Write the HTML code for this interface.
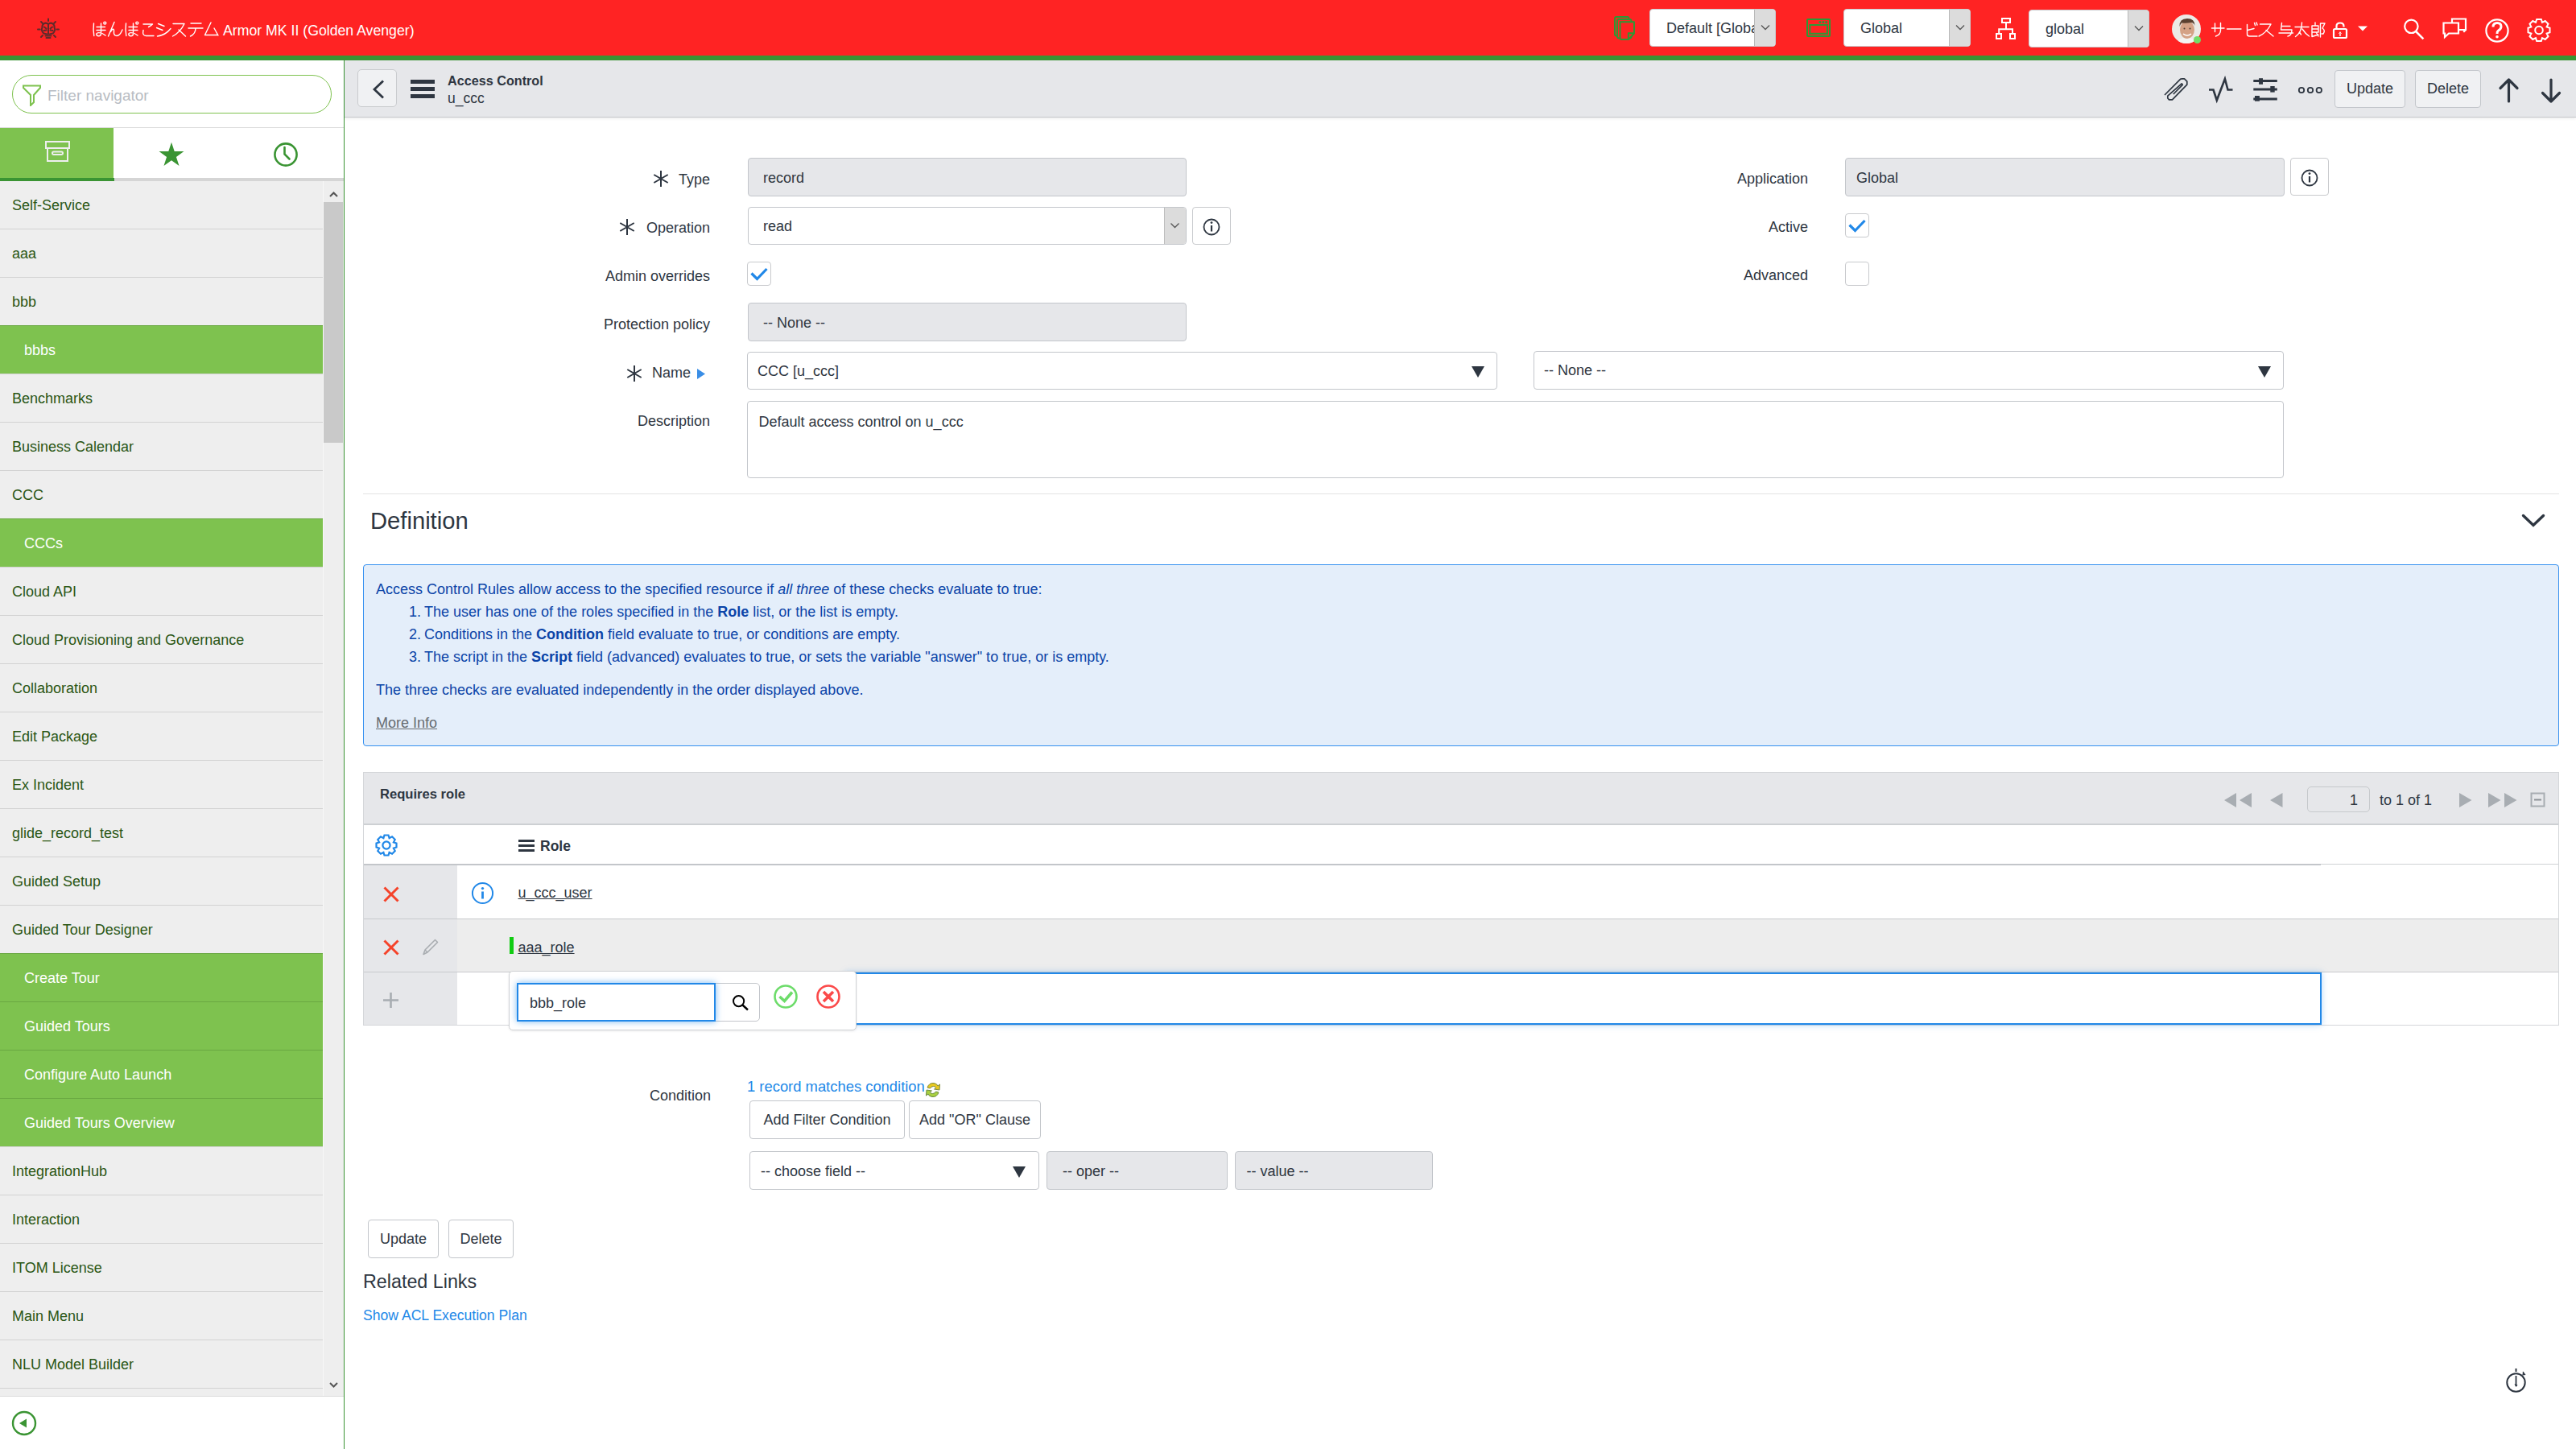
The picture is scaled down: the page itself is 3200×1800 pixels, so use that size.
<!DOCTYPE html>
<html><head><meta charset="utf-8">
<style>
*{box-sizing:border-box;margin:0;padding:0}
html,body{width:3200px;height:1800px;overflow:hidden;background:#fff;font-family:"Liberation Sans",sans-serif;color:#2e3641}
.a{position:absolute}
svg{display:block}
#hdr{left:0;top:0;width:3200px;height:69px;background:#ff2323}
#gbar{left:0;top:69px;width:3200px;height:6px;background:#3a9433}
#side{left:0;top:75px;width:427px;height:1725px;background:#fff}
#sideb{left:427px;top:75px;width:1px;height:1725px;background:#3a9433}
#cont{left:428px;top:75px;width:2772px;height:1725px;background:#fff}
.hsel{background:#fff;border:1px solid #c9cbce;border-radius:4px;height:47px;font-size:18px;color:#2e3641}
.hsel .t{position:absolute;left:20px;top:13px;white-space:nowrap;overflow:hidden}
.hsel .ar{position:absolute;right:0;top:0;width:26px;height:45px;background:#dcdcdc;border-left:1px solid #b9b9b9;border-radius:0 3px 3px 0}
.row{position:absolute;left:0;width:401px;height:60px;background:#eeeeee;border-top:1px solid #d2d2d2;font-size:18px;color:#2a5614}
.row span{position:absolute;left:15px;top:20px;white-space:nowrap}
.row.g{background:#7ec24f;color:#fff;border-top:1px solid #6aa842}
.row.g span{left:30px}
.lbl{position:absolute;font-size:18px;color:#2e3641;white-space:nowrap;text-align:right}
.inp{position:absolute;border:1px solid #c3c6cb;border-radius:4px;background:#fff;font-size:18px;color:#2e3641}
.inp.ro{background:#e6e7ea}
.inp .t{position:absolute;left:19px;top:13px;white-space:nowrap}
.btn{position:absolute;border:1px solid #c3c6cb;border-radius:4px;background:#fff;font-size:18px;color:#2e3641;text-align:center;white-space:nowrap}
</style></head><body>
<div id="hdr" class="a">
<svg class="a" style="left:0;top:0" width="3200" height="69" viewBox="0 0 3200 69">
 <g fill="none" stroke="#5e2b2b" stroke-width="2" stroke-linecap="round">
  <path d="M60,23.5 V26 M49.5,36.5 H47 M70.5,36.5 H73 M51,27 L53,29 M69,27 L67,29 M51,46 L53,44 M69,46 L67,44"/>
  <path d="M60,30 Q57,27.5 54.5,29.5 Q52,31 52.5,34 Q51,36.5 52.5,39 Q53.5,42 56.5,42 Q58.5,43 60,42 Q61.5,43 63.5,42 Q66.5,42 67.5,39 Q69,36.5 67.5,34 Q68,31 65.5,29.5 Q63,27.5 60,30 Z"/>
  <path d="M60,30 V42 M55,33.5 L57.5,35.5 M65,33.5 L62.5,35.5 M54.5,38 L57.5,37.5 M65.5,38 L62.5,37.5 M56.5,44.5 H63.5 M57.5,47 H62.5"/>
 </g>
 <g fill="none" stroke="#fff" stroke-width="1.4" stroke-linecap="round" stroke-linejoin="round">
  <path d="M116.5,29 Q115.5,37 116.8,44.5 M120,33.5 H130.5 M120,37.5 H131 M125.5,29 V42 Q125.5,44.7 122.5,44.7 Q119.8,44.7 119.8,42.6 Q119.8,40.6 123,40.6 Q127,40.6 131,44"/>
  <circle cx="130.3" cy="28.6" r="1.5"/>
  <path d="M142,27.5 L134.5,45 M137.5,39.5 Q140,34.5 141.5,37 V41.5 Q142,44.5 145,44.5 Q149,44.5 152,37"/>
  <path d="M156.5,29 Q155.5,37 156.8,44.5 M160,33.5 H170.5 M160,37.5 H171 M165.5,29 V42 Q165.5,44.7 162.5,44.7 Q159.8,44.7 159.8,42.6 Q159.8,40.6 163,40.6 Q167,40.6 171,44"/>
  <circle cx="170.3" cy="28.6" r="1.5"/>
  <path d="M178,30 H189.5 Q187.5,32 184.5,33.5 M178,37.5 Q176.5,44.5 181.5,44.5 H191"/>
  <path d="M196.5,29.5 L204,32.5 M194.5,34.5 L202,37.5 M195.5,45 Q206,43.5 212,35.5"/>
  <path d="M215,29.5 H229 Q224,40 214.5,45 M222,37 L230.5,45"/>
  <path d="M237,29 H250 M234,35 H252 M243,35 Q243,42 236.5,45"/>
  <path d="M262,28 L254.5,43.5 H270.5 M266,35 L271,44"/>
 </g>
 <text x="277" y="44" fill="#fff" font-size="17.7" font-family="Liberation Sans">Armor MK II (Golden Avenger)</text>
 <!-- docs icon -->
 <g fill="#ff2323" stroke="#2a9a35" stroke-width="1.9" stroke-linejoin="round">
  <rect x="2006" y="21" width="17.5" height="23.5" rx="2"/>
  <rect x="2009" y="24" width="17.5" height="23.5" rx="2"/>
  <path d="M2012.5,27.2 H2030 V41.5 L2023,49 H2014.5 Q2012.5,49 2012.5,47 Z"/>
  <path d="M2022.8,48.5 V41.2 H2029.5" fill="none"/>
 </g>
 <!-- window icon -->
 <g fill="none" stroke="#2a9a35" stroke-width="2">
  <rect x="2245" y="24" width="28" height="21" rx="1"/>
  <rect x="2248.3" y="31" width="21.6" height="10.8"/>
 </g>
 <g fill="#2a9a35"><circle cx="2260.8" cy="27.6" r="1.5"/><circle cx="2264.8" cy="27.6" r="1.5"/><circle cx="2268.7" cy="27.6" r="1.5"/></g>
 <!-- hierarchy icon -->
 <g fill="none" stroke="#fff" stroke-width="2">
  <rect x="2487" y="23" width="10" height="5"/><rect x="2480" y="42" width="6" height="6"/><rect x="2497" y="42" width="6" height="6"/>
  <path d="M2492,28 V36.2 M2483.2,42 V36.2 H2500 V42"/>
 </g>
 <!-- lock -->
 <g fill="none" stroke="#fff" stroke-width="2.2">
  <rect x="2899" y="36" width="16" height="11" rx="1.5"/>
  <path d="M2902.5,36 V32.5 Q2902.5,28.5 2907,28.5 Q2911.5,28.5 2911.5,32.5 V33.5"/>
 </g>
 <path d="M2907,39 L2905,42 H2909 Z M2906.3,41.5 H2907.7 V45 H2906.3 Z" fill="#fff"/>
 <path d="M2929,32.5 H2941 L2935,38.5 Z" fill="#fff"/>
 <g fill="none" stroke="#fff" stroke-width="2.2" stroke-linecap="square">
  <circle cx="2995.4" cy="32.8" r="8.2"/><path d="M3002,40 L3009.5,47.5" stroke-width="2.6"/>
  <path d="M3046,28 V23.5 H3063 V37 L3061,39 M3063,37 H3055"/>
  <path d="M3035.5,28.5 H3054 V41.5 H3042 L3037,46 V41.5 H3035.5 Z"/>
  <circle cx="3102" cy="38" r="13.6"/>
 </g>
 <path d="M3097,33.5 Q3097,28.5 3102,28.5 Q3107,28.5 3107,33 Q3107,36 3103.5,38 Q3102,39 3102,42" fill="none" stroke="#fff" stroke-width="3"/>
 <circle cx="3102" cy="45.8" r="1.8" fill="#fff"/>
 <g transform="translate(3154,37.5)" fill="none" stroke="#fff" stroke-width="2">
  <path d="M-2.8,-13.5 H2.8 L4,-9.6 L7.7,-11.5 L11.5,-7.7 L9.6,-4 L13.5,-2.8 V2.8 L9.6,4 L11.5,7.7 L7.7,11.5 L4,9.6 L2.8,13.5 H-2.8 L-4,9.6 L-7.7,11.5 L-11.5,7.7 L-9.6,4 L-13.5,2.8 V-2.8 L-9.6,-4 L-11.5,-7.7 L-7.7,-11.5 L-4,-9.6 Z"/>
  <circle r="4.8"/>
 </g>
 <!-- name -->
 <g fill="none" stroke="#fff" stroke-width="1.4" stroke-linecap="round" stroke-linejoin="round">
  <path d="M2747.5,35 H2763 M2751.5,29 V39.5 M2758.5,28.5 V37.5 Q2758.5,43 2752.5,45"/>
  <path d="M2766.5,36 H2784"/>
  <path d="M2791.5,30.5 V42.5 Q2791.5,45 2794.5,45 H2804 M2792,37.5 L2800,35.5 M2800.5,28.5 L2801.5,31.5 M2803,28 L2804,31"/>
  <path d="M2807.5,30 H2821 Q2816,40.5 2806,45 M2815,37.5 L2824,45"/>
  <path d="M2834.5,28.5 L2833.5,37 H2847 Q2847,44 2842,45 M2834,32.5 H2845 M2831,41 H2848.5"/>
  <path d="M2851,33.5 H2868 M2859.5,28 Q2859.5,40 2851.5,45.5 M2860,36 Q2864,42 2868.5,45 M2856.5,40 L2858.5,43"/>
  <path d="M2872,32 H2880 V40 H2872 Z M2872,36 H2880 M2876,28 V32 M2872,40 V45.5 L2880,43 M2877,40 L2880,45 M2882.5,29 V46 M2882.5,29 H2888 L2885,35 Q2889,38 2886,42 H2884"/>
 </g>
</svg>
<div class="a hsel" style="left:2049px;top:11px;width:157px"><div class="t" style="width:126px">Default [Global]</div><div class="ar"><svg width="26" height="45"><path d="M8,19.5 L13,24.5 L18,19.5" fill="none" stroke="#555" stroke-width="1.3"/></svg></div></div>
<div class="a hsel" style="left:2290px;top:11px;width:158px"><div class="t">Global</div><div class="ar"><svg width="26" height="45"><path d="M8,19.5 L13,24.5 L18,19.5" fill="none" stroke="#555" stroke-width="1.3"/></svg></div></div>
<div class="a hsel" style="left:2520px;top:12px;width:150px"><div class="t">global</div><div class="ar"><svg width="26" height="45"><path d="M8,19.5 L13,24.5 L18,19.5" fill="none" stroke="#555" stroke-width="1.3"/></svg></div></div>
<svg class="a" style="left:2698px;top:18px" width="36" height="36"><defs><clipPath id="av"><circle cx="18" cy="18" r="18"/></clipPath></defs><g clip-path="url(#av)"><rect width="36" height="36" fill="#eceae6"/><path d="M6,36 Q8,29 18,28 Q28,29 30,36 Z" fill="#f4f4f2"/><ellipse cx="19" cy="19" rx="9" ry="11" fill="#d4a286"/><path d="M9.5,15 Q9,5 19,5 Q28.5,5 28.5,14 Q27,10 24,10 Q18,11 12,10.5 Q10.5,12 9.5,15 Z" fill="#5a4030"/><path d="M14,24 Q19,28 24,24" fill="none" stroke="#fff" stroke-width="1.6"/><circle cx="15.5" cy="17.5" r="1" fill="#4a3a30"/><circle cx="22.5" cy="17.5" r="1" fill="#4a3a30"/></g></svg>
<div class="a" style="left:2725px;top:45px;width:9px;height:9px;border-radius:50%;background:#71dd68"></div>
</div>
<div id="gbar" class="a"></div>
<div id="side" class="a">
<div class="a" style="left:15px;top:18px;width:397px;height:48px;border:1.5px solid #7ec24f;border-radius:24px;background:#fff"></div>
<svg class="a" style="left:27px;top:29px" width="26" height="28"><path d="M2,2.5 H23 V5 L15,14 V23 L11,27 V14 L2,5 Z" fill="none" stroke="#7ec24f" stroke-width="2"/></svg>
<div class="a" style="left:59px;top:33px;font-size:19px;color:#b7bcc3;white-space:nowrap">Filter navigator</div>
<div class="a" style="left:0;top:83px;width:427px;height:1px;background:#dcdcdc"></div>
<div class="a" style="left:0;top:84px;width:141px;height:62px;background:#7ec24f"></div>
<svg class="a" style="left:0;top:84px" width="427" height="62">
 <g fill="none" stroke="#eeeeee" stroke-width="2"><rect x="57" y="17" width="29" height="8"/><path d="M59,25 V41 H84 V25"/><rect x="65" y="29.5" width="13" height="3.5" rx="1.7"/></g>
 <path d="M213,16.5 L216.3,26.5 H226.8 L218.3,32.7 L221.5,42.7 L213,36.5 L204.5,42.7 L207.7,32.7 L199.2,26.5 H209.7 Z" fill="#3a9433" transform="translate(213,34) scale(1.12) translate(-213,-31)"/>
 <circle cx="355" cy="33" r="13.6" fill="none" stroke="#3a9433" stroke-width="2.6"/>
 <path d="M353.5,24 V32.5 L359.5,38.5" fill="none" stroke="#3a9433" stroke-width="2.6" stroke-linecap="round"/>
</svg>
<div class="a" style="left:0;top:146px;width:427px;height:4px;background:#d5d5d5"></div>
<div class="a" style="left:0;top:146px;width:142px;height:4px;background:#3a9433"></div>
<div class="a" style="left:0;top:150px;width:427px;height:1509px;overflow:hidden;background:#eeeeee">
<div class="row" style="top:-1px"><span>Self-Service</span></div>
<div class="row" style="top:59px"><span>aaa</span></div>
<div class="row" style="top:119px"><span>bbb</span></div>
<div class="row g" style="top:179px"><span>bbbs</span></div>
<div class="row" style="top:239px"><span>Benchmarks</span></div>
<div class="row" style="top:299px"><span>Business Calendar</span></div>
<div class="row" style="top:359px"><span>CCC</span></div>
<div class="row g" style="top:419px"><span>CCCs</span></div>
<div class="row" style="top:479px"><span>Cloud API</span></div>
<div class="row" style="top:539px"><span>Cloud Provisioning and Governance</span></div>
<div class="row" style="top:599px"><span>Collaboration</span></div>
<div class="row" style="top:659px"><span>Edit Package</span></div>
<div class="row" style="top:719px"><span>Ex Incident</span></div>
<div class="row" style="top:779px"><span>glide_record_test</span></div>
<div class="row" style="top:839px"><span>Guided Setup</span></div>
<div class="row" style="top:899px"><span>Guided Tour Designer</span></div>
<div class="row g" style="top:959px"><span>Create Tour</span></div>
<div class="row g" style="top:1019px"><span>Guided Tours</span></div>
<div class="row g" style="top:1079px"><span>Configure Auto Launch</span></div>
<div class="row g" style="top:1139px"><span>Guided Tours Overview</span></div>
<div class="row" style="top:1199px"><span>IntegrationHub</span></div>
<div class="row" style="top:1259px"><span>Interaction</span></div>
<div class="row" style="top:1319px"><span>ITOM License</span></div>
<div class="row" style="top:1379px"><span>Main Menu</span></div>
<div class="row" style="top:1439px"><span>NLU Model Builder</span></div>
<div class="row" style="top:1499px"><span>Now Mobile</span></div>
<div class="a" style="left:401px;top:0;width:26px;height:1509px;background:#eeeeee;border-left:1px solid #f8f8f8"></div>
<div class="a" style="left:402px;top:26px;width:24px;height:299px;background:#c9c9c9"></div>
<svg class="a" style="left:401px;top:0" width="26" height="1509"><path d="M9,19 L13.5,14.5 L18,19" fill="none" stroke="#555" stroke-width="2.2"/><path d="M9,1568 L13.5,1572.5 L18,1568" transform="translate(0,-75)" fill="none" stroke="#555" stroke-width="2"/></svg>
</div>
<div class="a" style="left:0;top:1659px;width:427px;height:66px;background:#fff;border-top:1px solid #dcdcdc"></div>
<svg class="a" style="left:14px;top:1677px" width="34" height="34"><circle cx="16" cy="16" r="14" fill="none" stroke="#3a9433" stroke-width="2.4"/><path d="M10,16 L19,10.5 V21.5 Z" fill="#3a9433"/></svg>
</div>
<div id="sideb" class="a"></div>
<div id="cont" class="a"></div>
<!-- content header -->
<div class="a" style="left:428px;top:75px;width:2772px;height:71px;background:#e6e7ea;border-bottom:1px solid #c4c6ca;box-shadow:0 2px 3px rgba(0,0,0,0.06)"></div>
<div class="a" style="left:444px;top:86px;width:49px;height:47px;background:#f0f1f3;border:1px solid #c9cbce;border-radius:5px"></div>
<svg class="a" style="left:428px;top:75px" width="2772" height="70">
 <path d="M47,26.5 L37,36 L47,45.5" fill="none" stroke="#2e3641" stroke-width="2.8" stroke-linecap="square"/>
 <path d="M82,26.5 H112 M82,35.5 H112 M82,44.5 H112" stroke="#2e3641" stroke-width="5"/>
</svg>
<div class="a" style="left:556px;top:91px;font-size:16.2px;font-weight:bold;color:#2e3641;white-space:nowrap">Access Control</div>
<div class="a" style="left:556px;top:111.5px;font-size:17.5px;color:#2e3641;white-space:nowrap">u_ccc</div>
<svg class="a" style="left:2680px;top:90px" width="520" height="45">
 <path d="M9,28 L28.5,8.3 Q29.3,7.8 30.5,7.8 H33.5 L36.8,11.2 V15.2 L18.5,33.8 H14.5 L12.8,32 V29.2 L30.2,13.8 L31.3,15.3 L19.8,27" fill="none" stroke="#2e3641" stroke-width="1.7" stroke-linejoin="round"/>
 <path d="M64,21.5 H69.5 L73.8,34.5 L83.9,8 L87.5,21.5 H93.5" fill="none" stroke="#2e3641" stroke-width="2.6" stroke-linejoin="miter"/>
 <g stroke="#2e3641" stroke-width="2.8"><path d="M119.3,10.5 H148.8 M119.3,21 H148.8 M119.3,33 H148.8"/></g>
 <g fill="#2e3641"><rect x="126.1" y="7.2" width="4.9" height="7.6"/><rect x="140.3" y="17" width="5.4" height="7.6"/><rect x="121" y="29" width="5.9" height="6.7"/></g>
 <g fill="none" stroke="#2e3641" stroke-width="1.8"><circle cx="179" cy="22" r="3.2"/><circle cx="190" cy="22" r="3.2"/><circle cx="200.8" cy="22" r="3.2"/></g>
 <path d="M436.5,36 V9 M426,19.5 L436.5,9 L447,19.5" fill="none" stroke="#2e3641" stroke-width="3.2" stroke-linecap="round" stroke-linejoin="round"/>
 <path d="M489,9 V36 M478.5,25.5 L489,36 L499.5,25.5" fill="none" stroke="#2e3641" stroke-width="3.2" stroke-linecap="round" stroke-linejoin="round"/>
</svg>
<div class="btn" style="left:2900px;top:87px;width:88px;height:47px;background:#f0f1f3;line-height:45px">Update</div>
<div class="btn" style="left:3000px;top:87px;width:82px;height:47px;background:#f0f1f3;line-height:45px">Delete</div>

<!--FORM-->
<svg class="a" style="left:810px;top:211px" width="22" height="22"><g stroke="#2e3641" stroke-width="2"><path d="M11,1 V21 M2.3,6 L19.7,16 M2.3,16 L19.7,6"/></g></svg>
<div class="a" style="right:2318px;top:213.6px;font-size:18px;line-height:1;font-weight:normal;color:#2e3641;white-space:nowrap;">Type</div>
<svg class="a" style="left:768px;top:271px" width="22" height="22"><g stroke="#2e3641" stroke-width="2"><path d="M11,1 V21 M2.3,6 L19.7,16 M2.3,16 L19.7,6"/></g></svg>
<div class="a" style="right:2318px;top:273.6px;font-size:18px;line-height:1;font-weight:normal;color:#2e3641;white-space:nowrap;">Operation</div>
<div class="a" style="right:2318px;top:333.6px;font-size:18px;line-height:1;font-weight:normal;color:#2e3641;white-space:nowrap;">Admin overrides</div>
<div class="a" style="right:2318px;top:393.6px;font-size:18px;line-height:1;font-weight:normal;color:#2e3641;white-space:nowrap;">Protection policy</div>
<svg class="a" style="left:777px;top:453px" width="22" height="22"><g stroke="#2e3641" stroke-width="2"><path d="M11,1 V21 M2.3,6 L19.7,16 M2.3,16 L19.7,6"/></g></svg>
<div class="a" style="right:2342px;top:453.6px;font-size:18px;line-height:1;font-weight:normal;color:#2e3641;white-space:nowrap;">Name</div>
<svg class="a" style="left:866px;top:457.5px" width="11" height="13"><path d="M0,0 L10,6.5 L0,13 Z" fill="#3a8ee6"/></svg>
<div class="a" style="right:2318px;top:513.6px;font-size:18px;line-height:1;font-weight:normal;color:#2e3641;white-space:nowrap;">Description</div>
<div class="a" style="left:929px;top:196px;width:545px;height:48px;background:#e6e7ea;border:1px solid #c3c6cb;border-radius:4px;"></div>
<div class="a" style="left:948px;top:212.1px;font-size:18px;line-height:1;font-weight:normal;color:#2e3641;white-space:nowrap;">record</div>
<div class="a" style="left:929px;top:257px;width:545px;height:47px;background:#fff;border:1px solid #c3c6cb;border-radius:4px;"></div>
<div class="a" style="left:1446px;top:258px;width:27px;height:45px;background:#dcdcdc;border-left:1px solid #bdbdbd;border-radius:0 3px 3px 0"></div>
<svg class="a" style="left:1446px;top:258px" width="27" height="45"><path d="M8.5,19.5 L13.5,24.5 L18.5,19.5" fill="none" stroke="#555" stroke-width="1.3"/></svg>
<div class="a" style="left:948px;top:272.1px;font-size:18px;line-height:1;font-weight:normal;color:#2e3641;white-space:nowrap;">read</div>
<div class="a" style="left:1481px;top:257px;width:48px;height:47px;background:#fff;border:1px solid #c8cacd;border-radius:4px;"></div><svg class="a" style="left:1481px;top:257px" width="48" height="47"><circle cx="24" cy="25" r="9.5" fill="none" stroke="#2e3641" stroke-width="1.8"/><path d="M24,23 V30.5" stroke="#2e3641" stroke-width="2.2"/><circle cx="24" cy="19.6" r="1.4" fill="#2e3641"/></svg>
<div class="a" style="left:928px;top:325px;width:30px;height:30px;background:#fff;border:1px solid #c8cacd;border-radius:4px;"></div><svg class="a" style="left:928px;top:325px" width="30" height="30"><path d="M5.5,14.5 L12.5,21.5 L24.5,9" fill="none" stroke="#2188e8" stroke-width="3.2"/></svg>
<div class="a" style="left:929px;top:376px;width:545px;height:48px;background:#e6e7ea;border:1px solid #c3c6cb;border-radius:4px;"></div>
<div class="a" style="left:948px;top:392.1px;font-size:18px;line-height:1;font-weight:normal;color:#2e3641;white-space:nowrap;">-- None --</div>
<div class="a" style="left:928px;top:437px;width:932px;height:47px;background:#fff;border:1px solid #c3c6cb;border-radius:4px;"></div>
<div class="a" style="left:941px;top:452.1px;font-size:18px;line-height:1;font-weight:normal;color:#2e3641;white-space:nowrap;">CCC [u_ccc]</div>
<svg class="a" style="left:1827.5px;top:455.0px" width="16" height="14"><path d="M0,0 H16 L8.0,14 Z" fill="#2e3641"/></svg>
<div class="a" style="left:1905px;top:436px;width:932px;height:48px;background:#fff;border:1px solid #c3c6cb;border-radius:4px;"></div>
<div class="a" style="left:1918px;top:451.1px;font-size:18px;line-height:1;font-weight:normal;color:#2e3641;white-space:nowrap;">-- None --</div>
<svg class="a" style="left:2804.5px;top:455.0px" width="16" height="14"><path d="M0,0 H16 L8.0,14 Z" fill="#2e3641"/></svg>
<div class="a" style="left:928px;top:498px;width:1909px;height:96px;background:#fff;border:1px solid #c3c6cb;border-radius:4px;"></div>
<div class="a" style="left:942.5px;top:514.6px;font-size:18px;line-height:1;font-weight:normal;color:#2e3641;white-space:nowrap;">Default access control on u_ccc</div>
<div class="a" style="right:954px;top:212.6px;font-size:18px;line-height:1;font-weight:normal;color:#2e3641;white-space:nowrap;">Application</div>
<div class="a" style="right:954px;top:273.1px;font-size:18px;line-height:1;font-weight:normal;color:#2e3641;white-space:nowrap;">Active</div>
<div class="a" style="right:954px;top:332.6px;font-size:18px;line-height:1;font-weight:normal;color:#2e3641;white-space:nowrap;">Advanced</div>
<div class="a" style="left:2292px;top:196px;width:546px;height:48px;background:#e6e7ea;border:1px solid #c3c6cb;border-radius:4px;"></div>
<div class="a" style="left:2306px;top:212.1px;font-size:18px;line-height:1;font-weight:normal;color:#2e3641;white-space:nowrap;">Global</div>
<div class="a" style="left:2845px;top:196px;width:48px;height:47px;background:#fff;border:1px solid #c8cacd;border-radius:4px;"></div><svg class="a" style="left:2845px;top:196px" width="48" height="47"><circle cx="24" cy="25" r="9.5" fill="none" stroke="#2e3641" stroke-width="1.8"/><path d="M24,23 V30.5" stroke="#2e3641" stroke-width="2.2"/><circle cx="24" cy="19.6" r="1.4" fill="#2e3641"/></svg>
<div class="a" style="left:2292px;top:265px;width:30px;height:30px;background:#fff;border:1px solid #c8cacd;border-radius:4px;"></div><svg class="a" style="left:2292px;top:265px" width="30" height="30"><path d="M5.5,14.5 L12.5,21.5 L24.5,9" fill="none" stroke="#2188e8" stroke-width="3.2"/></svg>
<div class="a" style="left:2292px;top:325px;width:30px;height:30px;background:#fff;border:1px solid #c8cacd;border-radius:4px;"></div>
<div class="a" style="left:451px;top:613px;width:2728px;height:1px;background:#e3e3e3"></div>
<!--/FORM-->
<!--DEF-->
<div class="a" style="left:460px;top:633.2px;font-size:29.2px;line-height:1;font-weight:normal;color:#2e3641;white-space:nowrap;">Definition</div>
<svg class="a" style="left:3130px;top:636px" width="34" height="22"><path d="M4.5,4.5 L17,16.5 L29.5,4.5" fill="none" stroke="#2e3641" stroke-width="3.4" stroke-linecap="round"/></svg>
<div class="a" style="left:451px;top:701px;width:2728px;height:226px;background:#e4eefa;border:1px solid #3590f0;border-radius:4px"></div>
<div class="a" style="left:467px;top:722.6px;font-size:18px;line-height:1;font-weight:normal;color:#0b44a8;white-space:nowrap;">Access Control Rules allow access to the specified resource if <i>all three</i> of these checks evaluate to true:</div>
<div class="a" style="left:508px;top:751.1px;font-size:18px;line-height:1;font-weight:normal;color:#0b44a8;white-space:nowrap;">1.</div>
<div class="a" style="left:527px;top:751.1px;font-size:18px;line-height:1;font-weight:normal;color:#0b44a8;white-space:nowrap;">The user has one of the roles specified in the <b>Role</b> list, or the list is empty.</div>
<div class="a" style="left:508px;top:779.1px;font-size:18px;line-height:1;font-weight:normal;color:#0b44a8;white-space:nowrap;">2.</div>
<div class="a" style="left:527px;top:779.1px;font-size:18px;line-height:1;font-weight:normal;color:#0b44a8;white-space:nowrap;">Conditions in the <b>Condition</b> field evaluate to true, or conditions are empty.</div>
<div class="a" style="left:508px;top:807.1px;font-size:18px;line-height:1;font-weight:normal;color:#0b44a8;white-space:nowrap;">3.</div>
<div class="a" style="left:527px;top:807.1px;font-size:18px;line-height:1;font-weight:normal;color:#0b44a8;white-space:nowrap;">The script in the <b>Script</b> field (advanced) evaluates to true, or sets the variable "answer" to true, or is empty.</div>
<div class="a" style="left:467px;top:848.1px;font-size:18px;line-height:1;font-weight:normal;color:#0b44a8;white-space:nowrap;">The three checks are evaluated independently in the order displayed above.</div>
<div class="a" style="left:467px;top:889.1px;font-size:18px;line-height:1;font-weight:normal;color:#666b70;white-space:nowrap;text-decoration:underline">More Info</div>
<div class="a" style="left:451px;top:959px;width:2728px;height:315px;border:1px solid #d4d6d9;background:#fff"></div>
<div class="a" style="left:452px;top:960px;width:2726px;height:65px;background:#e6e7ea;border-bottom:2px solid #cdd0d3"></div>
<div class="a" style="left:472px;top:978.7px;font-size:16.6px;line-height:1;font-weight:bold;color:#2e3641;white-space:nowrap;">Requires role</div>
<svg class="a" style="left:2755px;top:980px" width="420" height="30"><g fill="#a8adb2"><path d="M8,14 L23,5 V23 Z M27,14 L42,5 V23 Z M65,14 L80.5,5 V23 Z"/><path d="M300,5 L315.5,14 L300,23 Z M336,5 L351.5,14 L336,23 Z M356,5 L371.5,14 L356,23 Z"/></g><rect x="389.5" y="5.5" width="16" height="16" fill="none" stroke="#a8adb2" stroke-width="2"/><path d="M393,13.5 H402" stroke="#8c9196" stroke-width="2"/></svg>
<div class="a" style="left:2866px;top:977px;width:78px;height:32px;background:#e6e7ea;border:1px solid #c6c9cc;border-radius:5px;"></div>
<div class="a" style="right:271px;top:985.1px;font-size:18px;line-height:1;font-weight:normal;color:#2e3641;white-space:nowrap;">1</div>
<div class="a" style="left:2956px;top:985.1px;font-size:18px;line-height:1;font-weight:normal;color:#2e3641;white-space:nowrap;">to 1 of 1</div>
<div class="a" style="left:452px;top:1073px;width:2431px;height:2px;background:#c3c6ca"></div>
<div class="a" style="left:2883px;top:1073px;width:295px;height:1px;background:#d0d2d5"></div>
<svg class="a" style="left:465px;top:1035px" width="30" height="30"><g transform="translate(15,15)" fill="none" stroke="#2188e8" stroke-width="2.2"><path d="M-2.5,-12.5 H2.5 L3.6,-8.9 L7.1,-10.7 L10.7,-7.1 L8.9,-3.6 L12.5,-2.5 V2.5 L8.9,3.6 L10.7,7.1 L7.1,10.7 L3.6,8.9 L2.5,12.5 H-2.5 L-3.6,8.9 L-7.1,10.7 L-10.7,7.1 L-8.9,3.6 L-12.5,2.5 V-2.5 L-8.9,-3.6 L-10.7,-7.1 L-7.1,-10.7 L-3.6,-8.9 Z"/><circle r="4.6"/></g></svg>
<svg class="a" style="left:644px;top:1042px" width="21" height="17"><path d="M0,2.5 H20 M0,8.5 H20 M0,14.5 H20" stroke="#2e3641" stroke-width="3"/></svg>
<div class="a" style="left:671px;top:1042.5px;font-size:17.5px;line-height:1;font-weight:bold;color:#2e3641;white-space:nowrap;">Role</div>
<div class="a" style="left:452px;top:1075px;width:116px;height:66px;background:#e6e7ea"></div>
<div class="a" style="left:452px;top:1141px;width:2726px;height:1px;background:#c8cacd"></div>
<div class="a" style="left:452px;top:1142px;width:2726px;height:65px;background:#ededed"></div>
<div class="a" style="left:452px;top:1142px;width:116px;height:65px;background:#e6e7ea"></div>
<div class="a" style="left:452px;top:1207px;width:2726px;height:1px;background:#c8cacd"></div>
<div class="a" style="left:452px;top:1208px;width:116px;height:65px;background:#e6e7ea"></div>
<svg class="a" style="left:476px;top:1101px" width="20" height="20"><path d="M1.5,1.5 L18.5,18.5 M18.5,1.5 L1.5,18.5" stroke="#f5432a" stroke-width="3"/></svg>
<svg class="a" style="left:476px;top:1167px" width="20" height="20"><path d="M1.5,1.5 L18.5,18.5 M18.5,1.5 L1.5,18.5" stroke="#f5432a" stroke-width="3"/></svg>
<svg class="a" style="left:585px;top:1095px" width="29" height="29"><circle cx="14.5" cy="14.5" r="12.6" fill="none" stroke="#2188e8" stroke-width="2"/><path d="M14.5,12.5 V21.5" stroke="#2188e8" stroke-width="2.8"/><circle cx="14.5" cy="8.6" r="1.7" fill="#2188e8"/></svg>
<div class="a" style="left:643.5px;top:1099.6px;font-size:18px;line-height:1;font-weight:normal;color:#2e3641;white-space:nowrap;text-decoration:underline">u_ccc_user</div>
<svg class="a" style="left:523px;top:1166px" width="22" height="22"><path d="M3,19.5 L5,14 L17.5,1.5 L20.5,4.5 L8,17 Z M5,14 L8,17" fill="none" stroke="#a9adb1" stroke-width="1.6" stroke-linejoin="round"/></svg>
<div class="a" style="left:633px;top:1164px;width:5px;height:21px;background:#11cc11"></div>
<div class="a" style="left:643.5px;top:1167.6px;font-size:18px;line-height:1;font-weight:normal;color:#2e3641;white-space:nowrap;text-decoration:underline">aaa_role</div>
<svg class="a" style="left:475px;top:1232px" width="21" height="21"><path d="M10.5,1 V20 M1,10.5 H20" stroke="#a8adb2" stroke-width="2.6"/></svg>
<div class="a" style="left:1050px;top:1208px;width:1834px;height:65px;border:2px solid #2188e8;background:#fff;box-shadow:0 0 8px rgba(33,136,232,0.35)"></div>
<div class="a" style="left:632px;top:1206px;width:432px;height:74px;background:#fff;border:1px solid #d0d2d5;border-radius:5px;box-shadow:0 1px 3px rgba(0,0,0,0.08)"></div>
<div class="a" style="left:886px;top:1221px;width:58px;height:48px;background:#fff;border:1px solid #c3c6cb;border-radius:0 5px 5px 0"></div>
<div class="a" style="left:642px;top:1221px;width:247px;height:48px;background:#fff;border:2px solid #2188e8;box-shadow:0 0 8px rgba(33,136,232,0.6)"></div>
<div class="a" style="left:658px;top:1236.6px;font-size:18px;line-height:1;font-weight:normal;color:#2e3641;white-space:nowrap;">bbb_role</div>
<svg class="a" style="left:905px;top:1231px" width="30" height="30"><circle cx="12.6" cy="12.6" r="6.6" fill="none" stroke="#000" stroke-width="2"/><path d="M17.5,17.5 L24,23.5" stroke="#000" stroke-width="2.4"/></svg>
<svg class="a" style="left:960px;top:1222px" width="32" height="32"><circle cx="16" cy="16" r="13.5" fill="none" stroke="#6ddc6a" stroke-width="2.6"/><path d="M8.5,16 L14.5,21.5 L24,10.5" fill="none" stroke="#6ddc6a" stroke-width="3.6"/></svg>
<svg class="a" style="left:1013px;top:1222px" width="32" height="32"><circle cx="16" cy="16" r="13.5" fill="none" stroke="#fb4a4a" stroke-width="2.6"/><path d="M10,10 L22,22 M22,10 L10,22" stroke="#fb4a4a" stroke-width="3.6"/></svg>
<div class="a" style="right:2317px;top:1352.1px;font-size:18px;line-height:1;font-weight:normal;color:#2e3641;white-space:nowrap;">Condition</div>
<div class="a" style="left:928px;top:1341.2px;font-size:18.4px;line-height:1;font-weight:normal;color:#2188e8;white-space:nowrap;">1 record matches condition</div>
<svg class="a" style="left:1148px;top:1342px" width="22" height="24"><path d="M4,9 Q6,3 12,3.5 Q16,4 17,7 L19.5,5 L19,12 L12.5,11 L15,9.5 Q13.5,7.5 11.5,7.5 Q8.5,7.5 7.5,10 Z" fill="#e8c820" stroke="#7a8a40" stroke-width="1"/><path d="M18,15 Q16,21 10,20.5 Q6,20 5,17 L2.5,19 L3,12 L9.5,13 L7,14.5 Q8.5,16.5 10.5,16.5 Q13.5,16.5 14.5,14 Z" fill="#a8d040" stroke="#6a8a40" stroke-width="1"/></svg>
<div class="btn" style="left:931px;top:1367px;width:193px;height:48px;line-height:46px">Add Filter Condition</div>
<div class="btn" style="left:1129px;top:1367px;width:164px;height:48px;line-height:46px">Add "OR" Clause</div>
<div class="a" style="left:931px;top:1430px;width:360px;height:48px;background:#fff;border:1px solid #c3c6cb;border-radius:4px;"></div>
<div class="a" style="left:945px;top:1445.6px;font-size:18px;line-height:1;font-weight:normal;color:#2e3641;white-space:nowrap;">-- choose field --</div>
<svg class="a" style="left:1257.5px;top:1449.0px" width="16" height="14"><path d="M0,0 H16 L8.0,14 Z" fill="#2e3641"/></svg>
<div class="a" style="left:1300px;top:1430px;width:225px;height:48px;background:#e6e7ea;border:1px solid #c3c6cb;border-radius:4px;"></div>
<div class="a" style="left:1320px;top:1445.6px;font-size:18px;line-height:1;font-weight:normal;color:#2e3641;white-space:nowrap;">-- oper --</div>
<div class="a" style="left:1534px;top:1430px;width:246px;height:48px;background:#e6e7ea;border:1px solid #c3c6cb;border-radius:4px;"></div>
<div class="a" style="left:1548.5px;top:1445.6px;font-size:18px;line-height:1;font-weight:normal;color:#2e3641;white-space:nowrap;">-- value --</div>
<div class="btn" style="left:457px;top:1515px;width:88px;height:48px;line-height:46px">Update</div>
<div class="btn" style="left:557px;top:1515px;width:81px;height:48px;line-height:46px">Delete</div>
<div class="a" style="left:451px;top:1581.1px;font-size:23.3px;line-height:1;font-weight:normal;color:#2e3641;white-space:nowrap;">Related Links</div>
<div class="a" style="left:451px;top:1626.4px;font-size:17.6px;line-height:1;font-weight:normal;color:#2188e8;white-space:nowrap;">Show ACL Execution Plan</div>
<svg class="a" style="left:3110px;top:1696px" width="32" height="36"><circle cx="15.5" cy="21.5" r="11.2" fill="none" stroke="#2e3641" stroke-width="2"/><path d="M15.5,13 V26" stroke="#2e3641" stroke-width="1.8"/><path d="M13.5,23 L17.5,24.5 L15.5,27 Z" fill="#2e3641"/><path d="M15.5,4 V8" stroke="#2e3641" stroke-width="2"/><path d="M24,8 L26.5,11.5 L23.5,12" fill="#2e3641" stroke="#2e3641" stroke-width="1.2"/></svg>
<!--/DEF-->
<script>(function(){var w=window.innerWidth;if(w&&Math.abs(w-3200)>2){document.body.style.zoom=w/3200;}})();</script>
</body></html>
